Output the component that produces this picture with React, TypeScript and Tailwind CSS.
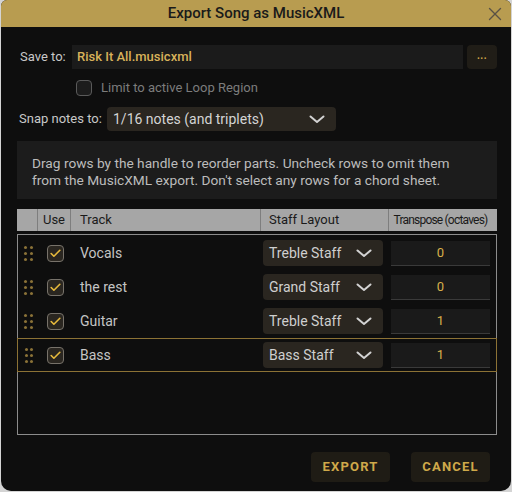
import { Check, X } from 'lucide-react';

const rows = [
  { name: 'Vocals', staff: 'Treble Staff', transpose: '0' },
  { name: 'the rest', staff: 'Grand Staff', transpose: '0' },
  { name: 'Guitar', staff: 'Treble Staff', transpose: '1' },
  { name: 'Bass', staff: 'Bass Staff', transpose: '1', active: true },
];

function Chevron() {
  return (
    <svg width="16" height="9" viewBox="0 0 16 9" fill="none">
      <path d="M1.5 1.5 L8 7 L14.5 1.5" stroke="#d2d2d2" strokeWidth="2" strokeLinecap="round" strokeLinejoin="round" />
    </svg>
  );
}

function Handle() {
  return (
    <div className="grid grid-cols-2 gap-x-[3px] gap-y-[3px] w-[8px]">
      {[0, 1, 2, 3, 4, 5].map((i) => (
        <span key={i} className="w-[3px] h-[3px] rounded-full bg-[#8a7238]" />
      ))}
    </div>
  );
}

function Box() {
  return (
    <div className="w-[17px] h-[17px] rounded-[4px] border border-[#77726a] bg-[#2a2620] flex items-center justify-center">
      <Check className="w-[13px] h-[13px] text-[#e6b93c]" strokeWidth={3} />
    </div>
  );
}

export default function App() {
  return (
    <div className="w-[512px] h-[492px] bg-[#d4d4d4] font-['Roboto',sans-serif]">
      <div className="w-[510px] h-[491px] ml-px bg-[#0e0e0e] rounded-t-[6px] rounded-b-[10px] overflow-hidden flex flex-col">
        {/* Title bar */}
        <div className="relative h-[27px] bg-[#b89c50] flex items-center justify-center">
          <span className="text-[15px] text-[#1a1a1a] font-medium">Export Song as MusicXML</span>
          <X className="absolute right-[5px] top-[3px] w-[22px] h-[22px] text-[#5a5246]" strokeWidth={1.5} />
        </div>

        <div className="flex flex-col pl-[16px] pr-[14px]">
          {/* Save to */}
          <div className="flex items-center mt-[18px] h-[24px]">
            <span className="ml-[3px] w-[52px] text-[13px] text-[#c8c8c8]">Save to:</span>
            <div className="w-[391px] h-[24px] bg-[#1b1b1b] flex items-center px-[5px] text-[13px] text-[#d8b25a] font-medium">
              Risk It All.musicxml
            </div>
            <div className="ml-[4px] w-[30px] h-[24px] rounded-[4px] bg-[#201d17] flex items-center justify-center text-[#d3a94a] text-[10px] font-bold tracking-[0.5px] pb-[3px]">
              ...
            </div>
          </div>

          {/* Loop region */}
          <div className="flex items-center mt-[10px] ml-[59px] h-[18px]">
            <div className="w-[16px] h-[16px] rounded-[4px] border border-[#5a5a5a] bg-[#1c1c1c]" />
            <span className="ml-[9px] text-[13px] text-[#7c7c7c]">Limit to active Loop Region</span>
          </div>

          {/* Snap notes */}
          <div className="flex items-center mt-[10px] h-[24px]">
            <span className="ml-[2px] w-[88px] text-[13px] text-[#c8c8c8]">Snap notes to:</span>
            <div className="w-[229px] h-[24px] rounded-[4px] bg-[#2a2620] flex items-center justify-between pl-[6px] pr-[11px] text-[14px] text-[#d4d4d4]">
              <span>1/16 notes (and triplets)</span>
              <Chevron />
            </div>
          </div>

          {/* Info */}
          <div className="mt-[10px] w-[480px] h-[58px] bg-[#1c1c1c] pl-[15px] pr-[40px] pt-[14px] text-[13.7px] leading-[17px] text-[#bcbcbc]">
            Drag rows by the handle to reorder parts. Uncheck rows to omit them from the MusicXML export. Don't select any rows for a chord sheet.
          </div>

          {/* Table header */}
          <div className="mt-[10px] w-[480px] h-[22px] bg-[#a6a6a6] flex text-[#1a1a1a]">
            <div className="w-[21px] border-r border-[#7e7e7e]" />
            <div className="w-[33px] border-r border-[#7e7e7e] text-[13px] flex items-center justify-center">Use</div>
            <div className="w-[190px] border-r border-[#7e7e7e] text-[13px] flex items-center pl-[9px]">Track</div>
            <div className="w-[128px] border-r border-[#7e7e7e] text-[13px] flex items-center pl-[8px]">Staff Layout</div>
            <div className="w-[103px] text-[12px] tracking-[-0.8px] flex items-center justify-center">Transpose (octaves)</div>
          </div>

          {/* Table body */}
          <div className="mt-[3px] w-[480px] h-[201px] border border-[#8c8c8c] pt-px">
            {rows.map((r) => (
              <div
                key={r.name}
                className={`h-[34px] flex items-center ${r.active ? 'border border-[#8c7235] -mx-px' : ''}`}
              >
                <div className={`w-[20px] flex justify-center ${r.active ? 'pl-px' : ''}`}>
                  <Handle />
                </div>
                <div className="w-[34px] flex justify-center">
                  <Box />
                </div>
                <div className="w-[191px] pl-[8px] text-[14px] text-[#c4c4c4]">{r.name}</div>
                <div className="w-[120px] h-[26px] rounded-[4px] bg-[#2a2620] flex items-center justify-between pl-[6px] pr-[11px] text-[14px] text-[#cfcfcf]">
                  <span>{r.staff}</span>
                  <Chevron />
                </div>
                <div className="ml-[8px] w-[99px] h-[25px] bg-[#1a1a1a] border-b border-[#3a3a3a] flex items-center justify-center text-[13px] text-[#d8b04a]">
                  {r.transpose}
                </div>
              </div>
            ))}
          </div>

          {/* Buttons */}
          <div className="flex justify-end gap-[21px] mt-[17px] pr-[7px]">
            <button className="w-[79px] h-[30px] rounded-[4px] bg-[#1f1c15] text-[13px] font-bold tracking-[1.2px] text-[#cfa94a]">
              EXPORT
            </button>
            <button className="w-[79px] h-[30px] rounded-[4px] bg-[#1f1c15] text-[13px] font-bold tracking-[1.2px] text-[#cfa94a]">
              CANCEL
            </button>
          </div>
        </div>
      </div>
    </div>
  );
}
